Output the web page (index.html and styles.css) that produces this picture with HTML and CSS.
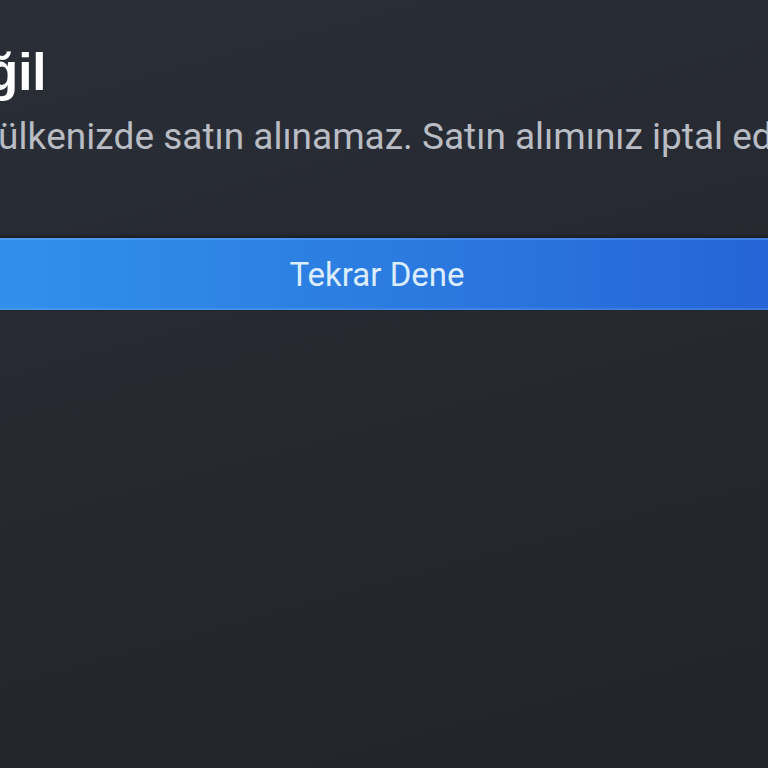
FILE: index.html
```html
<!DOCTYPE html>
<html lang="tr">
<head>
<meta charset="utf-8">
<title>Ürün Mevcut Değil</title>
<link rel="stylesheet" href="styles.css">
</head>
<body>
<main class="dialog">
  <h1 class="dialog-title"><span class="offscreen-lead title-lead">Ürün Mevcut De</span>ğil</h1>
  <p class="dialog-body"><span class="offscreen-lead body-lead">Bu ürün </span>ülkenizde satın alınamaz. Satın alımınız iptal edildi.</p>
  <div class="dialog-actions">
    <button class="btn-primary" type="button">Tekrar Dene</button>
  </div>
</main>
</body>
</html>
```

FILE: styles.css
```css
html, body {
  margin: 0;
  padding: 0;
  width: 768px;
  height: 768px;
  overflow: hidden;
}

body {
  background: linear-gradient(165deg, #2a2e37 0%, #262930 45%, #222429 100%);
  font-family: "Liberation Sans", Arial, sans-serif;
  font-kerning: none;
}

.dialog {
  display: flex;
  flex-direction: column;
  padding-top: 43px;
}

.offscreen-lead {
  display: inline-block;
  text-align: right;
  white-space: pre;
  overflow: hidden;
  vertical-align: top;
}

.dialog-title {
  margin: 0 0 0 -413px;
  font-size: 51px;
  line-height: 60px;
  font-weight: 700;
  color: #ffffff;
  white-space: nowrap;
}

.title-lead {
  width: 400px;
}

.dialog-body {
  margin: 11px 0 0 -302px;
  font-family: Roboto, "Liberation Sans", sans-serif;
  font-size: 37px;
  line-height: 46px;
  color: #b9bdc3;
  white-space: nowrap;
}

.body-lead {
  width: 300px;
}

.dialog-actions {
  margin-top: 78px;
  display: flex;
}

.btn-primary {
  flex: none;
  width: 900px;
  height: 72px;
  margin-left: -73px;
  border: 0;
  padding: 0;
  background: linear-gradient(to right, #3393ec 0%, #2e86e5 30%, #2a74dd 65%, #2461d5 100%);
  box-shadow: inset 0 2px 0 rgba(120, 180, 255, 0.35), inset 0 -2px 0 rgba(120, 180, 255, 0.25), 0 -2px 3px rgba(0, 0, 0, 0.35);
  color: #dcedff;
  font-family: Roboto, "Liberation Sans", sans-serif;
  font-size: 33px;
  display: flex;
  align-items: center;
  justify-content: center;
}
```
